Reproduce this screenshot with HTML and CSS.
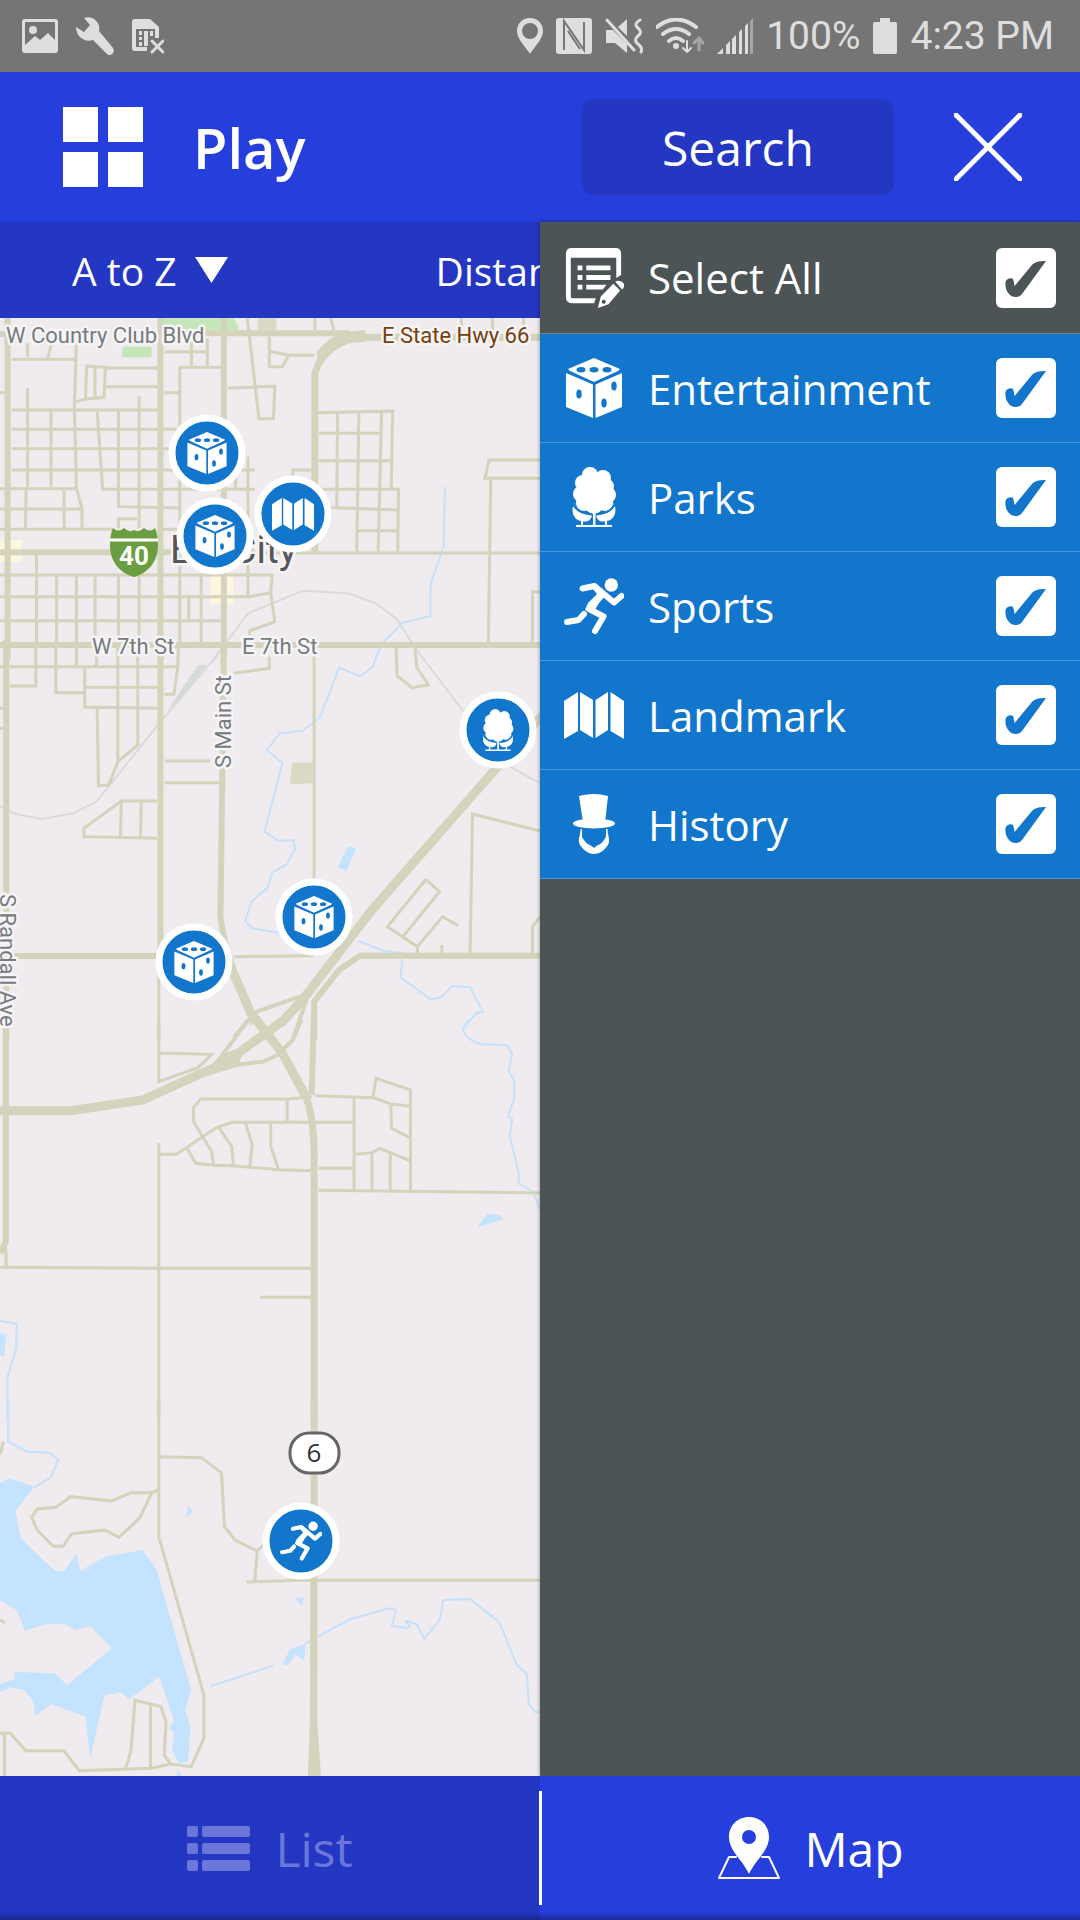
FILE: index.html
```html
<!DOCTYPE html>
<html lang="en">
<head>
    <meta charset="UTF-8">
    <meta name="viewport" content="width=device-width, initial-scale=1.0">
    <title>Play</title>
    <link rel="stylesheet" href="styles.css">
</head>
<body>
    <!-- Shared icons -->
    <svg class="sprite" aria-hidden="true">
        <symbol id="icon-dice" viewBox="0 0 60 60">
            <path d="M30 0L56 11L54 13L30 24L6 13L4 11ZM2 15L29 26.500V60L2 49ZM58 15L31.500 26.500V60L58 49Z"/>
            <g class="cut">
                <ellipse cx="17" cy="11.700" rx="4.500" ry="2.700"/>
                <ellipse cx="30" cy="11.700" rx="4.500" ry="2.700"/>
                <ellipse cx="43" cy="11.700" rx="4.500" ry="2.700"/>
                <ellipse cx="15" cy="36" rx="2.700" ry="4.500"/>
                <ellipse cx="50" cy="28" rx="2.700" ry="4.500"/>
                <ellipse cx="40" cy="45" rx="2.700" ry="4.500"/>
            </g>
        </symbol>
        <symbol id="icon-tree" viewBox="0 0 60 60">
            <path d="M10 36C13 44 20 47 28 47C28 53 23 56 18 54C11 54 6 46 10 36ZM50 36C47 44 40 47 32 47C32 53 37 56 42 54C49 54 54 46 50 36Z"/>
            <circle cx="26" cy="8" r="8"/>
            <circle cx="39" cy="11" r="8"/>
            <circle cx="19" cy="16" r="8"/>
            <circle cx="17" cy="27" r="8"/>
            <circle cx="20" cy="36" r="8"/>
            <circle cx="43" cy="19" r="7"/>
            <circle cx="44" cy="28" r="8"/>
            <circle cx="41" cy="36" r="8"/>
            <circle cx="30" cy="38" r="9"/>
            <circle cx="30" cy="25" r="16"/>
            <path class="cut-line" d="M9 37Q14 47 28 47.500M51 37Q46 47 32 47.500"/>
            <path d="M29 44h2.500v14H48v2H12v-2h17ZM17 53h2v5h-2ZM41 53h2v5h-2Z"/>
        </symbol>
        <symbol id="icon-run" viewBox="0 0 60 60">
            <circle cx="47.300" cy="9" r="6.700"/>
            <path d="M30 7L36 12L43 18L35 27L29 37L21 34L24 27L33 18L28 12Z"/>
            <g fill="none" stroke="currentColor" stroke-width="6" stroke-linecap="round" stroke-linejoin="round">
                <path d="M18.500 12.500L30.500 10L50 26.500L57.500 20"/>
                <path d="M25 33L39.500 40.500L31 55"/>
                <path d="M20 38L14.500 44L3 46"/>
            </g>
        </symbol>
        <symbol id="icon-map" viewBox="0 0 60 60">
            <path d="M0 16L14 7V46L0 54ZM16 7L29 15V53L16 45ZM31.500 15L44 7V45L31.500 53ZM46.500 7L60 16V54L46.500 46Z"/>
        </symbol>
        <symbol id="icon-hat" viewBox="0 0 60 60">
            <path d="M15 2Q30 -2 44 2L41.500 25H18.500Z"/>
            <ellipse cx="30" cy="29.500" rx="21" ry="5"/>
            <path d="M16.500 35H17.800C18.500 40 17 43 20 46C23 51 26 50 30 54C34 50 37 51 40 46C43 43 41.500 40 42.200 35H43.700C43 40 47 46 44 51C40 57 35 60 30 60C25 60 20 57 16 51C13 46 17 40 16.500 35Z"/>
        </symbol>
        <symbol id="icon-tick" viewBox="0 0 60 60">
            <path d="M9.500 34C10 31 15 29 17 31C18 33 18 36 18.600 38L36 17C39 13.500 44 13 50 13L26 46C23 50 16 50 13 46C10 43 9 38 9.500 34Z"/>
        </symbol>
    </svg>

    <div class="status-bar">
        <div class="status-group">
            <svg width="36" height="36" viewBox="0 0 36 36">
                <path fill-rule="evenodd" d="M3 1H33Q36 1 36 4V32Q36 35 33 35H3Q0 35 0 32V4Q0 1 3 1ZM3 4V27L13 18L18 22L26 15L33 22V4Z"/>
                <circle cx="11" cy="12" r="4"/>
            </svg>
            <svg width="38" height="38" viewBox="0 0 38 38">
                <path d="M8 1C16 -2 25 5 23 14L37 31C40 36 34 40 31 37L17 23C8 26 0 19 0 10L8 15L14 8Z"/>
            </svg>
            <svg width="32" height="36" viewBox="0 0 32 36">
                <path fill-rule="evenodd" d="M3 1H18L27 9V20H23V11H4V29H15V33H3Q0 33 0 30V4Q0 1 3 1Z"/>
                <path d="M7 13h3v4h-3ZM7 19h3v3h-3ZM7 24h3v4h-3ZM12 13h4v15h-4ZM18 13h3v5h-3Z"/>
                <path class="line" stroke-width="3" d="M20 23L31 34M31 23L20 34"/>
            </svg>
        </div>
        <div class="status-group status-right">
            <svg width="26" height="36" viewBox="0 0 26 36">
                <path fill-rule="evenodd" d="M13 0C21 0 26 6 26 13C26 21 18 28 13 36C8 28 0 21 0 13C0 6 5 0 13 0ZM13 5A8 8 0 1 0 13 21A8 8 0 1 0 13 5Z"/>
            </svg>
            <svg width="36" height="36" viewBox="0 0 36 36">
                <path d="M3 0H33Q36 0 36 3V33Q36 36 33 36H3Q0 36 0 33V3Q0 0 3 0Z"/>
                <path class="ground-line" stroke-width="2" d="M8 32V3L28 32V4M12 13L24 31"/>
            </svg>
            <svg width="38" height="36" viewBox="0 0 38 36">
                <path d="M1 12H8L22 26V35L10 25H1ZM13 9L22 1V18Z"/>
                <path class="line" stroke-width="3" d="M2 2L29 32"/>
                <path class="line" stroke-width="3" d="M35 2Q28 6 33 10T33 18T33 26T36 34"/>
            </svg>
            <svg width="48" height="36" viewBox="0 0 48 36">
                <path class="line" stroke-width="4" d="M1 9Q20 -6 40 9M7 16Q20 6 33 16M13 23Q20 17 27 23"/>
                <circle cx="20" cy="28" r="3"/>
                <path class="line" stroke-width="2" d="M31 23V34M27 30L31 34L35 30"/>
                <path class="line faint" stroke-width="3" d="M43 32V21M38 25L43 20L47 25"/>
            </svg>
            <svg width="36" height="36" viewBox="0 0 36 36">
                <path d="M0 36L6 30V36ZM9 27l4-4v13h-4ZM15 21l4-4v19h-4ZM22 14l3-3v25h-3ZM28 8l3-3v31h-3Z"/>
                <path class="faint-fill" d="M33 3l3-3v36h-3Z"/>
            </svg>
            <span>100%</span>
            <svg width="24" height="36" viewBox="0 0 24 36">
                <path d="M7 0H17V4H22Q24 4 24 6V34Q24 36 22 36H2Q0 36 0 34V6Q0 4 2 4H7Z"/>
            </svg>
            <span>4:23 PM</span>
        </div>
    </div>

    <header class="header">
        <button class="icon-button" type="button" aria-label="Menu">
            <svg width="80" height="80" viewBox="0 0 80 80">
                <path d="M0 0h35v35H0ZM45 0h35v35H45ZM0 45h35v35H0ZM45 45h35v35H45Z"/>
            </svg>
        </button>
        <h1>Play</h1>
        <button class="search-button" type="button">Search</button>
        <button class="icon-button" type="button" aria-label="Close">
            <svg width="68" height="68" viewBox="0 0 68 68">
                <path class="line" stroke-width="5" d="M2 2L66 66M66 2L2 66"/>
            </svg>
        </button>
    </header>

    <main class="content">
        <div class="sort-bar">
            <button type="button">A to Z
                <svg width="33" height="26" viewBox="0 0 33 26"><path d="M0 0H33L16.500 26Z"/></svg>
            </button>
            <button type="button">Distance
                <svg width="33" height="26" viewBox="0 0 33 26"><path d="M0 0H33L16.500 26Z"/></svg>
            </button>
        </div>

        <svg class="map" viewBox="0 318 1080 1458" preserveAspectRatio="xMinYMin slice">
            <!-- North part of town -->
            <g transform="translate(0 310) scale(.3444 .3333)">
                <path class="park" d="M460 25H680L695 60H460ZM355 110H440V142H355Z"/>
                <path class="block" d="M748 25H802V60H748Z"/>
                <path class="mall" d="M0 690H62V755H0ZM610 795H678V883H610Z"/>
                <path class="rail" d="M620 1050L720 910L880 842L1010 850L1090 880L1150 925L1210 1020"/>
                <path class="river" d="M1292 530L1288 710L1250 825V918L1170 938L1110 1000L1090 1050"/>
                <path class="road" d="M34 148H216M222 80L216 298L222 535L238 595V655M222 275L246 268L302 262L306 172L252 168L248 268M276 172V268M306 174H458M306 230H458M80 100V140M150 100L138 145M0 248H14"/>
                <path class="road" d="M80 235V530M404 258V655M34 300H458M34 358H520M34 416H520M34 480H740M148 300V530M282 300L298 538H740M344 300V590L520 594M0 536H222M0 597H238M186 536V655M76 536L74 655M344 655V626H398M0 658H330M460 658H520"/>
                <path class="road" d="M0 795H790L786 848L725 860H0M0 932H640M106 727V1000M164 795V1000M222 795V1000M276 795V1000M344 795V1000M404 795V1000M522 358V1000M584 795V1000M548 865V932M720 440V860M684 500V538M786 848L798 935L725 962V985"/>
                <path class="road" d="M478 248H518M522 360V172H645M478 125H602M556 85V170M602 85V170M718 25L752 326H794L798 228L662 235M782 80V170H820L838 136M782 124L838 136H912M914 25V60M960 25L970 60M1340 25V60M1430 25V60M1520 25V60"/>
                <path class="road" d="M922 308L1140 303L1136 535M980 310L978 590M1042 305L1036 725M1108 305L1098 725M925 370H1105M925 452H1136M930 538H1157L1155 725M930 592L1157 600M1040 662H1157M850 500V480H912M1568 450H1420L1408 505H1568M1425 505L1418 1000M1546 995V845H1568"/>
                <path class="road street" d="M0 72H34M470 70H1015M22 25V1050M466 25V1050M650 25V1050M0 727H740M0 1005H3136"/>
                <path class="road" d="M740 729H1568"/>
                <path class="road highway" d="M1568 82H1015Q940 105 914 190V725"/>
                <path class="land-road" d="M1060 60L1000 66Q950 85 920 125L925 180Q960 115 1020 98L1060 95Z"/>
            </g>

            <!-- South of 7th street -->
            <g transform="translate(0 640) scale(.3444 .3333)">
                <path class="block" d="M848 368H908V430L841 433Z"/>
                <path class="water" d="M1012 618L1034 625L1006 692L981 682Z"/>
                <path class="yard" d="M490 205L575 75H600L520 185Z"/>
                <path class="rail" d="M0 498L45 522L122 537L212 520L280 485L462 250L640 35M1210 30L1346 215M1480 380L1568 430"/>
                <path class="river" d="M1100 30L1082 80L1045 110L985 82L930 230L880 272L812 280L775 330L820 370L768 575L808 603L852 600L857 628L830 675L792 697L775 745L730 785L712 843L735 866L810 878M1040 903L1115 933L1170 940M1168 960L1163 1012L1250 1078L1280 1073L1313 1038L1365 1042L1402 1115L1385 1118L1343 1168"/>
                <path class="road" d="M0 80H516M104 20V138H28M162 20V158H246M222 20V78M280 20V78M246 82V201L458 205M248 142H460M342 20V365M400 20V315L342 365L316 435L286 437L282 203M518 20L516 80L505 163H478M480 363H610M478 428H640M455 483H352L244 565V590L455 595M352 483L350 590M410 485L408 592M678 100L782 85V50M0 205H10M0 265H10"/>
                <path class="road" d="M912 -1V940M1150 25L1153 107L1196 143L1244 135L1210 82L1205 25M461 940V1200M680 950L912 947M1546 940V860L1568 830M1365 940L1372 522L1568 573M1237 718L1276 755L1170 890M1237 718L1125 860L1212 920V940M1212 920L1285 830L1330 857M1283 915V940"/>
                <path class="road street" d="M18 0V1200M466 0V940M650 0L645 440L640 830Q648 900 685 1010M40 948H460M3136 947H1045L985 990L912 1085V1200"/>
                <path class="road ramp" d="M870 1070L745 1115L680 1190M890 1080L850 1200"/>
                <path class="road freeway" d="M1600 195L1445 380L1080 810L930 1010Q890 1070 815 1150M678 1000L741 1150"/>
            </g>

            <!-- Interchange and farm roads -->
            <g transform="translate(0 1020) scale(.3444 .3333)">
                <path class="water" d="M1385 622L1415 582L1450 584L1462 598ZM0 938L18 945L12 1010L0 1005Z"/>
                <path class="river" d="M1360 0L1343 30Q1360 65 1400 73L1470 75L1487 100L1477 155L1493 180V235L1475 290L1487 297L1480 345L1507 465L1505 490L1548 515L1568 570M0 903L48 911L47 985L22 1070V1200"/>
                <path class="road" d="M461 0V185L575 143L615 103L465 99M461 370V1200M16 665L18 740M0 742L460 745H905M755 832H905M905 230L840 237H583L562 262V305L615 395L620 435M834 237V303M465 403H512L630 322L675 307H1028M543 385L568 430L620 436L678 437L810 449L905 452M635 322L673 380L678 437M712 307L732 372L726 437M786 307V378L808 447"/>
                <path class="road" d="M915 227L1083 233L1135 252L1190 258M1083 233L1092 175L1192 210V515M1028 232V512M1135 255L1137 325L1190 353M925 445H1025M925 511L1568 519M1030 403L1080 398L1103 385L1190 422M1080 400V512M1133 400V515"/>
                <path class="road street" d="M17 0V665L0 700M911 0L905 225"/>
                <path class="road ramp" d="M720 0L685 50L635 120M875 0L850 60L820 90M640 140L765 125L815 100"/>
                <path class="land-road" d="M640 105L715 75L690 140L580 175Z"/>
                <path class="road freeway" d="M825 0L650 130Q540 180 415 240L205 272H0M737 -10L820 100L885 225"/>
                <path class="road highway" d="M883 215Q912 290 912 400V1200"/>
            </g>

            <!-- Lake -->
            <g transform="translate(0 1400) scale(.3444 .3333)">
                <path class="water" d="M0 250L28 235L100 260L45 332L60 415L160 513H188L222 458L233 513L305 470L413 450L455 510L555 870L538 930L553 980L547 1085L518 1088L500 1050L507 1000L492 985L505 962L463 830L375 897L348 877L303 887L262 1075L248 950L150 912L102 947L97 905L70 870L28 862L0 876V853L42 838L43 816L158 820L195 855L325 745L262 678L218 690L190 673H132L72 692L50 632L0 600Z"/>
                <path class="water" d="M820 793L842 748L887 732L883 780L858 765L835 795ZM545 318L562 335L542 352ZM855 595L882 592L877 618ZM518 1110L527 1130H510Z"/>
                <path class="river" d="M24 0V125L78 155L143 158L170 180L147 232L100 262M612 858L795 797M885 732L1015 658L1130 625L1150 630L1138 678L1182 685L1190 677L1175 662L1210 672L1232 716L1277 660L1287 600L1365 597L1450 667L1500 793L1530 823L1535 912L1555 937H1568"/>
                <path class="road" d="M461 0V410L592 885V1015L555 1100L495 1092L440 1105L230 1112L185 1052H75L30 1000H0M13 1000V1130M465 170L585 173L643 218L652 380L682 420L747 453L765 435M747 453L740 543M716 546L870 541H3136"/>
                <path class="road" d="M461 270L440 278H380L325 303L205 290L163 322L108 327L92 352L108 390L155 439H183L208 401L305 390L345 412L405 355L440 280M388 900L467 920L482 965L477 1065L495 1092M392 900L380 1055L365 1105M437 910V1105M0 165L10 125M0 660L14 668"/>
                <path class="road highway" d="M912 0V540"/>
                <path class="land-road" d="M901 540H922L921 960L932 1130H894L900 960Z"/>
            </g>

            <g class="labels">
                <text x="6" y="343">W Country Club Blvd</text>
                <text class="label-highway" x="382" y="343">E State Hwy 66</text>
                <text x="92" y="654">W 7th St</text>
                <text x="242" y="654">E 7th St</text>
                <text transform="translate(231 768) rotate(-90)">S Main St</text>
                <text transform="translate(0 894) rotate(90)">S Randall Ave</text>
                <text class="label-city" x="170" y="563">Elk City</text>
            </g>

            <path class="interstate" d="M113 528Q118 533 124 528Q129 533 134 530Q139 533 144 528Q150 533 155 528Q158 534 158 545C158 562 148 573 134 577C120 573 110 562 110 545Q110 534 113 528Z"/>
            <path class="interstate-bar" d="M110 540H158"/>
            <text class="interstate-number" x="134" y="565">40</text>
            <rect class="state-route" x="290" y="1433" width="49" height="40" rx="19"/>
            <text class="state-route-number" x="314" y="1462">6</text>

            <a class="pin" href="#" aria-label="Entertainment" transform="translate(207 453)">
                <circle r="35"/><use href="#icon-dice" x="-21" y="-21" width="42" height="42"/>
            </a>
            <a class="pin" href="#" aria-label="Landmark" transform="translate(293 514)">
                <circle r="35"/><use href="#icon-map" x="-21" y="-21" width="42" height="42"/>
            </a>
            <a class="pin" href="#" aria-label="Entertainment" transform="translate(215 536)">
                <circle r="35"/><use href="#icon-dice" x="-21" y="-21" width="42" height="42"/>
            </a>
            <a class="pin" href="#" aria-label="Parks" transform="translate(498 730)">
                <circle r="35"/><use href="#icon-tree" x="-21" y="-21" width="42" height="42"/>
            </a>
            <a class="pin" href="#" aria-label="Entertainment" transform="translate(314 917)">
                <circle r="35"/><use href="#icon-dice" x="-21" y="-21" width="42" height="42"/>
            </a>
            <a class="pin" href="#" aria-label="Entertainment" transform="translate(194 962)">
                <circle r="35"/><use href="#icon-dice" x="-21" y="-21" width="42" height="42"/>
            </a>
            <a class="pin" href="#" aria-label="Sports" transform="translate(301 1541)">
                <circle r="35"/><use href="#icon-run" x="-21" y="-21" width="42" height="42"/>
            </a>
        </svg>

        <!-- Category filter -->
        <form class="drawer">
            <label class="row row-all" for="all">
                <svg class="row-icon" viewBox="0 0 60 62">
                    <path fill-rule="evenodd" d="M7 0H52Q58 0 58 6V28L53 31V10H6V50Q6 52 8 52H32L30 57H7Q1 57 1 51V6Q1 0 7 0Z"/>
                    <path d="M13 18h5v5h-5ZM22 18h25v5H22ZM13 28h5v5h-5ZM22 28h25v5H22ZM13 38h5v5h-5ZM22 38h21l-4 5H22Z"/>
                    <path fill-rule="evenodd" d="M34 62L37 50L50 37L57 44L45 58ZM38 55A2 2 0 1 0 42 56A2 2 0 1 0 38 55ZM52 35Q56 32 60 36Q63 39 59 43Z"/>
                </svg>
                <span class="row-text">Select All</span>
                <span class="check"><input type="checkbox" id="all" checked><svg><use href="#icon-tick"/></svg></span>
            </label>
            <label class="row" for="entertainment">
                <svg class="row-icon"><use href="#icon-dice"/></svg>
                <span class="row-text">Entertainment</span>
                <span class="check"><input type="checkbox" id="entertainment" checked><svg><use href="#icon-tick"/></svg></span>
            </label>
            <label class="row" for="parks">
                <svg class="row-icon"><use href="#icon-tree"/></svg>
                <span class="row-text">Parks</span>
                <span class="check"><input type="checkbox" id="parks" checked><svg><use href="#icon-tick"/></svg></span>
            </label>
            <label class="row" for="sports">
                <svg class="row-icon"><use href="#icon-run"/></svg>
                <span class="row-text">Sports</span>
                <span class="check"><input type="checkbox" id="sports" checked><svg><use href="#icon-tick"/></svg></span>
            </label>
            <label class="row" for="landmark">
                <svg class="row-icon"><use href="#icon-map"/></svg>
                <span class="row-text">Landmark</span>
                <span class="check"><input type="checkbox" id="landmark" checked><svg><use href="#icon-tick"/></svg></span>
            </label>
            <label class="row" for="history">
                <svg class="row-icon"><use href="#icon-hat"/></svg>
                <span class="row-text">History</span>
                <span class="check"><input type="checkbox" id="history" checked><svg><use href="#icon-tick"/></svg></span>
            </label>
        </form>
    </main>

    <nav class="tabs">
        <a class="tab tab-list" href="#list">
            <svg width="64" height="64" viewBox="0 0 64 64">
                <rect x="0" y="10" width="11" height="11" rx="2"/><rect x="15" y="10" width="48" height="11" rx="2"/>
                <rect x="0" y="27" width="11" height="11" rx="2"/><rect x="15" y="27" width="48" height="11" rx="2"/>
                <rect x="0" y="44" width="11" height="11" rx="2"/><rect x="15" y="44" width="48" height="11" rx="2"/>
            </svg>
            List
        </a>
        <a class="tab" href="#map">
            <svg width="64" height="64" viewBox="0 0 64 64">
                <path fill-rule="evenodd" d="M33 1C45 1 53 10 53 21C53 35 40 43 33 58C26 43 13 35 13 21C13 10 21 1 33 1ZM33 14A7 7 0 1 0 33 28A7 7 0 1 0 33 14Z"/>
                <path class="line" stroke-width="2" d="M20 41H13L3 62H63L53 41H46"/>
            </svg>
            Map
        </a>
    </nav>
</body>
</html>
```
FILE: styles.css
```css
* {
    box-sizing: border-box;
}

body {
    font-family: "Open Sans", "Noto Sans", sans-serif;
    background-color: #efebee;
    color: #fff;
    margin: 0;
    min-height: 100vh;
    display: flex;
    flex-direction: column;
}

button {
    background: none;
    border: none;
    padding: 0;
    color: inherit;
    font-family: inherit;
    cursor: pointer;
}

svg {
    display: block;
    fill: currentColor;
}

.sprite {
    position: absolute;
    width: 0;
    height: 0;
}

.line {
    fill: none;
    stroke: currentColor;
    stroke-linecap: round;
    stroke-linejoin: round;
}

.cut {
    fill: #1176cc;
}

.cut-line {
    fill: none;
    stroke: #1176cc;
    stroke-width: 2;
}

/* Status bar */
.status-bar {
    display: flex;
    justify-content: space-between;
    align-items: center;
    height: 72px;
    padding: 0 26px 0 22px;
    background-color: #757575;
    color: #dedede;
    font-family: Roboto, sans-serif;
    font-size: 39px;
}

.status-group {
    display: flex;
    align-items: center;
    gap: 18px;
}

.status-right {
    gap: 13px;
}

.ground-line {
    fill: none;
    stroke: #757575;
}

.faint {
    stroke: #a5a5a5;
}

.faint-fill {
    fill: #a5a5a5;
}

/* Header */
.header {
    display: flex;
    align-items: center;
    height: 150px;
    padding: 0 58px 0 63px;
    background-color: #263edb;
}

.header h1 {
    margin: 0 auto 0 50px;
    font-size: 56px;
    font-weight: 600;
}

.search-button {
    width: 312px;
    height: 96px;
    margin-right: 60px;
    border-radius: 12px;
    background-color: #2337c3;
    font-size: 48px;
}

/* Content */
.content {
    position: relative;
    flex: 1;
    display: flex;
    flex-direction: column;
}

.sort-bar {
    display: flex;
    gap: 208px;
    height: 96px;
    padding-left: 72px;
    background-color: #2337c3;
}

.sort-bar button {
    display: flex;
    align-items: center;
    gap: 18px;
    font-size: 39px;
}

/* Map */
.map {
    flex: 1;
    width: 100%;
    min-height: 0;
}

.road {
    fill: none;
    stroke: #d4d3bc;
    stroke-width: 3px;
    vector-effect: non-scaling-stroke;
}

.ramp {
    stroke-width: 4px;
}

.street {
    stroke-width: 6px;
}

.highway {
    stroke-width: 7px;
}

.freeway {
    stroke-width: 9px;
}

.land-road {
    fill: #d4d3bc;
}

.rail {
    fill: none;
    stroke: #d9dada;
    stroke-width: 2px;
    vector-effect: non-scaling-stroke;
}

.yard {
    fill: #d7dadb;
}

.river {
    fill: none;
    stroke: #c5e1fb;
    stroke-width: 2px;
    vector-effect: non-scaling-stroke;
}

.water {
    fill: #c4e3ff;
}

.park {
    fill: #c5e6b8;
}

.block {
    fill: #dad9c3;
}

.mall {
    fill: #fff6df;
}

.labels {
    font-family: Roboto, sans-serif;
    font-size: 22px;
    fill: #757b80;
    stroke: #f6f4f5;
    stroke-width: 5px;
    stroke-linejoin: round;
    paint-order: stroke;
}

.label-highway {
    fill: #74400f;
}

.label-city {
    font-size: 39px;
    fill: #55555a;
}

.interstate {
    fill: #6b9e40;
}

.interstate-bar {
    stroke: #fff;
    stroke-width: 3px;
}

.interstate-number {
    font-family: Roboto, sans-serif;
    font-size: 26px;
    font-weight: 700;
    text-anchor: middle;
}

.state-route {
    fill: #fff;
    stroke: #666;
    stroke-width: 3px;
}

.state-route-number {
    font-size: 26px;
    fill: #333;
    text-anchor: middle;
}

.pin {
    color: #fff;
}

.pin circle {
    fill: #1176cc;
    stroke: #fff;
    stroke-width: 7px;
}

/* Filter drawer, lies over the map */
.drawer {
    position: absolute;
    top: 0;
    right: 0;
    bottom: 0;
    width: 50%;
    background-color: #4d5456;
    box-shadow: 0 0 4px rgba(0, 0, 0, 0.4);
}

.row {
    display: flex;
    align-items: center;
    height: 109px;
    padding: 0 24px;
    border-bottom: 1px solid #4a96d8;
    background-color: #1176cc;
    color: #fff;
    font-size: 42px;
    cursor: pointer;
}

.row-all {
    height: 112px;
    border-bottom-color: #7b8081;
    background-color: #4d5456;
}

.row-icon {
    width: 60px;
    height: 60px;
}

.row-text {
    flex: 1;
    margin-left: 24px;
}

.check {
    display: grid;
    width: 60px;
    height: 60px;
    color: #1176cc;
}

.row-all .check {
    color: #4d5456;
}

.check input,
.check svg {
    grid-area: 1 / 1;
    width: 60px;
    height: 60px;
    margin: 0;
}

.check input {
    appearance: none;
    border-radius: 6px;
    background-color: #fff;
}

.check svg {
    z-index: 1;
    pointer-events: none;
}

.check input:not(:checked) + svg {
    visibility: hidden;
}

/* Bottom tabs */
.tabs {
    position: relative;
    display: flex;
    height: 144px;
}

.tabs::after {
    content: "";
    position: absolute;
    left: 50%;
    top: 15px;
    bottom: 15px;
    width: 3px;
    margin-left: -1px;
    background-color: #fff;
}

.tab {
    flex: 1;
    display: flex;
    justify-content: center;
    align-items: center;
    gap: 24px;
    background: linear-gradient(to top, rgba(0, 0, 0, 0.3), transparent 8px) #263edb;
    color: #fff;
    font-size: 48px;
    text-decoration: none;
}

.tab-list {
    background-color: #2337c3;
    color: #6a76d9;
}
```
